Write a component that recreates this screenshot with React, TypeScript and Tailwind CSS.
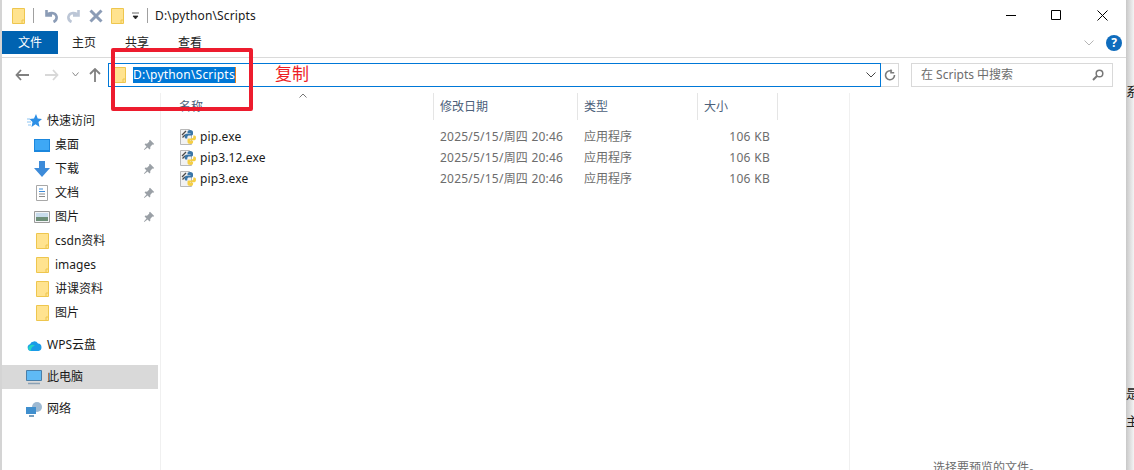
import React from 'react';

const font = "font-['Noto_Sans','Noto_Sans_CJK_SC',sans-serif]";

const Folder = ({ className = '' }: { className?: string }) => (
  <svg viewBox="0 0 13 16" className={`h-[16px] w-[13px] shrink-0 ${className}`}>
    <path d="M.5.500h12v15H.5z" fill="#ffe38f" stroke="#eec64e" />
    <path d="M10 15.500V12h2.500" fill="none" stroke="#eec64e" />
  </svg>
);

const Pin = () => (
  <svg viewBox="0 0 12 12" className="h-[12px] w-[12px]">
    <path d="M7 .8l4.200 4.200-1 .8-.8-.3L7.200 8l.2 1.600-.9.8L4.600 8.500 1.300 11 .9 10.600 3.500 7.400 1.600 5.500l.8-.9L4 4.800 6.300 2.600 6 1.800z" fill="#9aa0a6" />
  </svg>
);

const Python = () => (
  <svg viewBox="0 0 17 16" className="h-[16px] w-[17px] shrink-0">
    <path d="M.5.500h9l2 2v13H.5z" fill="#f2f2f2" stroke="#b8b8b8" />
    <path d="M2 6l4-4M2.500 8.500L5 6" stroke="#4a4a4a" strokeWidth="1.300" />
    <path d="M10 1C8 1 7.500 2 7.500 3v1.200h3v.6H6.200C5.200 4.800 4.600 5.800 4.600 7.200s.6 2.300 1.600 2.300h1.100V8.200c0-1 .8-1.700 1.800-1.700h2.500c.9 0 1.400-.6 1.400-1.400V3c0-1.200-1.300-2-3-2z" fill="#3a76a8" />
    <path d="M10.500 15c2 0 2.600-1 2.600-2v-1.200h-3v-.6h4.300c1 0 1.600-1 1.600-2.400s-.6-2.300-1.600-2.300h-1.100v1.300c0 1-.8 1.700-1.800 1.700H8.900c-.9 0-1.400.6-1.400 1.400V13c0 1.200 1.300 2 3 2z" fill="#f5cf47" />
  </svg>
);

const NavRow = ({ icon, label, pinned, sub, active, className = '' }: { icon: React.ReactNode; label: string; pinned?: boolean; sub?: boolean; active?: boolean; className?: string }) => (
  <div className={`flex h-[24px] items-center text-[12px] text-[#1a1a1a] ${active ? 'bg-[#d9d9d9]' : ''} ${className}`}>
    <div className={`mr-[5px] flex shrink-0 justify-center ${sub ? 'ml-[32px] w-[16px]' : 'ml-[24px] w-[16px]'}`}>{icon}</div>
    <span className="flex-1">{label}</span>
    {pinned && <div className="mr-[3px]"><Pin /></div>}
  </div>
);

const files = ['pip.exe', 'pip3.12.exe', 'pip3.exe'];

const Head = ({ label, w }: { label: string; w: string }) => (
  <div className={`flex h-[27px] items-center border-r border-[#e5e5e5] pl-[6px] text-[12px] text-[#4c607a] ${w}`}>{label}</div>
);

export default function App() {
  return (
    <div className={`relative flex h-[470px] w-[1134px] overflow-hidden bg-white ${font}`}>
      <div className="flex w-[1126px] shrink-0 flex-col border-l-2 border-[#d4d4d4] bg-white">
        {/* title bar */}
        <div className="flex h-[31px] shrink-0 items-center pl-[10px]">
          <Folder />
          <div className="ml-[8px] h-[15px] w-px bg-[#a0a0a0]" />
          <svg viewBox="0 0 14 14" className="ml-[10px] h-[14px] w-[14px]"><path d="M2.500 1v5.500H8M2.500 6.500C5 3 11.500 3 12.500 7.500c.5 2.500-1 4.500-3 5.500" fill="none" stroke="#8b9cb6" strokeWidth="2.600" /></svg>
          <svg viewBox="0 0 14 14" className="ml-[9px] h-[14px] w-[14px]"><path d="M11.500 1v5.500H6M11.500 6.500C9 3 2.500 3 1.500 7.500c-.5 2.500 1 4.500 3 5.500" fill="none" stroke="#bcc6d6" strokeWidth="2.600" /></svg>
          <svg viewBox="0 0 14 14" className="ml-[8px] h-[14px] w-[14px]"><path d="M1.500 1.500l11 11M12.500 1.500l-11 11" stroke="#8b9cb6" strokeWidth="3" /></svg>
          <Folder className="ml-[8px]" />
          <svg viewBox="0 0 8 8" className="ml-[8px] h-[8px] w-[8px]"><path d="M0 1h7M1 4h5l-2.500 3z" fill="#222" stroke="#222" strokeWidth=".7" /></svg>
          <div className="ml-[7px] h-[15px] w-px bg-[#a0a0a0]" />
          <span className="ml-[7px] text-[12px] tracking-[0.15px] text-[#1a1a1a]">D:\python\Scripts</span>
          <div className="ml-auto flex items-center">
            <svg viewBox="0 0 11 11" className="h-[11px] w-[11px]"><path d="M0 5.500h10" stroke="#000" /></svg>
            <svg viewBox="0 0 11 11" className="ml-[34px] h-[11px] w-[11px]"><path d="M.5.500h9v9h-9z" fill="none" stroke="#000" /></svg>
            <svg viewBox="0 0 11 11" className="ml-[35px] mr-[18px] h-[11px] w-[11px]"><path d="M.5.500l10 10M10.500.500l-10 10" stroke="#000" /></svg>
          </div>
        </div>
        {/* ribbon tabs */}
        <div className="flex h-[27px] shrink-0 items-start border-b border-[#dadada]">
          <div className="flex h-[23px] w-[56px] items-center justify-center bg-[#0063b1] text-[12px] text-white">文件</div>
          <div className="flex h-[24px] items-center pl-[14px] text-[12px] text-[#222]">
            <span>主页</span>
            <span className="ml-[29px]">共享</span>
            <span className="ml-[29px]">查看</span>
          </div>
          <div className="ml-auto mr-[4px] flex h-[24px] items-center">
            <svg viewBox="0 0 10 6" className="h-[6px] w-[10px]"><path d="M.5.500L5 5 9.500.500" fill="none" stroke="#b5b5b5" /></svg>
            <div className="ml-[12px] flex h-[16px] w-[16px] items-center justify-center rounded-full bg-[#0f6cbd] text-[12px] font-bold text-white">?</div>
          </div>
        </div>
        {/* address row */}
        <div className="flex h-[35px] shrink-0 items-start pt-[5px]">
          <svg viewBox="0 0 14 12" className="ml-[13px] mt-[6px] h-[12px] w-[14px]"><path d="M6 1L1.500 6 6 11M1.500 6H14" fill="none" stroke="#808080" strokeWidth="1.800" /></svg>
          <svg viewBox="0 0 14 12" className="ml-[16px] mt-[6px] h-[12px] w-[14px]"><path d="M8 1l4.500 5L8 11M12.500 6H0" fill="none" stroke="#d8d8d8" strokeWidth="1.800" /></svg>
          <svg viewBox="0 0 7 5" className="ml-[13px] mt-[9px] h-[5px] w-[7px]"><path d="M.5.500L3.500 4 6.500.500" fill="none" stroke="#888" /></svg>
          <svg viewBox="0 0 12 14" className="ml-[10px] mt-[5px] h-[14px] w-[12px]"><path d="M1 6l5-5 5 5M6 1v13" fill="none" stroke="#808080" strokeWidth="1.800" /></svg>
          <div className="ml-[7px] flex h-[24px] w-[773px] items-center border border-[#0078d7] pl-[4px]">
            <Folder />
            <span className="ml-[7px] bg-[#0078d7] text-[12px] leading-[16px] tracking-[0.2px] text-white">D:\python\Scripts</span>
            <div className="h-[16px] w-px bg-[#e8811f]" />
            <svg viewBox="0 0 10 6" className="ml-auto mr-[4px] h-[6px] w-[10px]"><path d="M.5.500L5 5 9.500.500" fill="none" stroke="#444" /></svg>
          </div>
          <div className="flex h-[24px] w-[18px] items-center justify-center border border-l-0 border-[#d9d9d9]">
            <svg viewBox="0 0 12 12" className="h-[12px] w-[12px]"><path d="M8 2.200A4.500 4.500 0 1 0 10.500 6M7 .5v3.200h3.200" fill="none" stroke="#7a7a7a" strokeWidth="1.600" /></svg>
          </div>
          <div className="ml-[12px] flex h-[24px] w-[202px] items-center border border-[#d9d9d9] pl-[9px] text-[12px] text-[#6d6d6d]">
            <span>在 Scripts 中搜索</span>
            <svg viewBox="0 0 12 12" className="ml-auto mr-[8px] h-[12px] w-[12px]"><circle cx="7.500" cy="4.500" r="3.300" fill="none" stroke="#777" strokeWidth="1.500" /><path d="M5 7l-4 4" stroke="#777" strokeWidth="2" /></svg>
          </div>
        </div>
        {/* body */}
        <div className="flex min-h-0 flex-1">
          <div className="w-[156px] shrink-0 pt-[16px]">
            <NavRow label="快速访问" icon={<svg viewBox="0 0 15 14" className="h-[14px] w-[15px]"><path d="M9 0l1.700 4.500L15 5l-3.500 3 1 5-4-2.700L4.500 13l1-5L2.500 5l4.500-.5z" fill="#2c8fe6" /><path d="M0 5h3M0 8h4M1 11h3" stroke="#8cc4f2" /></svg>} />
            <NavRow sub pinned label="桌面" icon={<svg viewBox="0 0 16 13" className="h-[13px] w-[16px]"><path d="M0 0h16v13H0z" fill="#1b87dd" /><path d="M1 1h14v10H1z" fill="#3ea8f5" /></svg>} />
            <NavRow sub pinned label="下载" icon={<svg viewBox="0 0 16 16" className="h-[16px] w-[16px]"><path d="M5 0h6v7h5l-8 9-8-9h5z" fill="#3d8bd9" /></svg>} />
            <NavRow sub pinned label="文档" icon={<svg viewBox="0 0 12 16" className="h-[16px] w-[12px]"><path d="M.5.500h11v15H.5z" fill="#fff" stroke="#a8a8a8" /><path d="M3 4h4M3 6.500h6" stroke="#3d8bd9" /><path d="M3 9h6M3 11.500h6" stroke="#8a8a8a" /></svg>} />
            <NavRow sub pinned label="图片" icon={<svg viewBox="0 0 16 12" className="h-[12px] w-[16px]"><path d="M.5.500h15v11H.5z" fill="#f2f4f6" stroke="#9a9a9a" /><path d="M2 2h12v4H2z" fill="#c8dcec" /><path d="M2 6h12v4H2z" fill="#6d8f78" /></svg>} />
            <NavRow sub label="csdn资料" icon={<Folder />} />
            <NavRow sub label="images" icon={<Folder />} />
            <NavRow sub label="讲课资料" icon={<Folder />} />
            <NavRow sub label="图片" icon={<Folder />} />
            <NavRow className="mt-[8px]" label="WPS云盘" icon={<svg viewBox="0 0 15 11" className="h-[11px] w-[15px]"><path d="M4 11a3.500 3.500 0 0 1-1-6.800A4.500 4.500 0 0 1 11 3.500 3.800 3.800 0 0 1 11.500 11z" fill="#1a9be8" /><path d="M1 8c2-4 5-4 7-2-2 0-4 1-4 5a3.500 3.500 0 0 1-3-3z" fill="#22d3c5" /></svg>} />
            <NavRow className="mt-[8px]" active label="此电脑" icon={<svg viewBox="0 0 16 15" className="h-[15px] w-[16px]"><path d="M.5.500h15v10H.5z" fill="#5fbaf5" stroke="#4b7fa8" /><path d="M2 13.500h12" stroke="#8aa0b4" strokeWidth="1.500" /></svg>} />
            <NavRow className="mt-[8px]" label="网络" icon={<svg viewBox="0 0 16 15" className="h-[15px] w-[16px]"><circle cx="11" cy="5" r="5" fill="#9db9d2" /><path d="M0 5h10v7H0z" fill="#3f8fce" /><path d="M3 14h5" stroke="#4b7fa8" strokeWidth="1.500" /></svg>} />
          </div>
          <div className="ml-[2px] w-[689px] shrink-0 border-l border-[#f0f0f0]">
            <div className="flex">
              <div className="relative">
                <Head label="" w="w-[273px]" />
                <span className="absolute left-[18px] top-[5px] text-[12px] text-[#4c607a]">名称</span>
                <svg viewBox="0 0 8 5" className="absolute left-[138px] top-[0px] h-[5px] w-[8px]"><path d="M.5 4.500L4 1l3.500 3.500" fill="none" stroke="#777" /></svg>
              </div>
              <Head label="修改日期" w="w-[144px]" />
              <Head label="类型" w="w-[120px]" />
              <Head label="大小" w="w-[80px]" />
            </div>
            <div className="pt-[6px]">
              {files.map((name) => (
                <div key={name} className="flex h-[21px] items-center text-[12px]">
                  <div className="flex w-[273px] items-center gap-[3px] pl-[19px] tracking-[0.12px] text-[#1a1a1a]"><Python /><span>{name}</span></div>
                  <div className="w-[144px] pl-[6px] tracking-[0.22px] text-[#6d6d6d]">2025/5/15/周四 20:46</div>
                  <div className="w-[120px] pl-[6px] text-[#6d6d6d]">应用程序</div>
                  <div className="w-[72px] text-right tracking-[0.3px] text-[#6d6d6d]">106 KB</div>
                </div>
              ))}
            </div>
          </div>
          <div className="flex-1 border-l border-[#f0f0f0] pt-[367px] text-center text-[12px] leading-[16px] text-[#6d6d6d]">
            <span className="mr-[2px]">选择要预览的文件。</span>
          </div>
        </div>
      </div>
      {/* right edge: shadow and the page behind the window */}
      <div className="h-full w-[8px] bg-gradient-to-r from-[#c8c8c8] to-[#f4f4f4]" />
      <span className="absolute left-[1126px] top-[82px] text-[13px] text-[#222]">系</span>
      <span className="absolute left-[1126px] top-[384px] text-[13px] text-[#222]">是</span>
      <span className="absolute left-[1126px] top-[412px] text-[13px] text-[#222]">主</span>
      {/* red annotation */}
      <div className="absolute left-[111px] top-[48px] h-[63px] w-[142px] rounded-[2px] border-[4px] border-[#ed1c2e]" />
      <span className="absolute left-[275px] top-[61px] text-[17px] text-[#ed1c24]">复制</span>
    </div>
  );
}
